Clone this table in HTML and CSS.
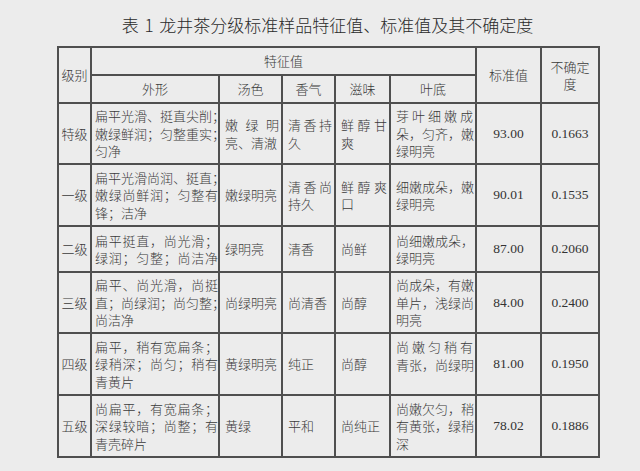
FILE: index.html
```html
<!DOCTYPE html>
<html lang="zh-CN">
<head>
<meta charset="utf-8">
<title>龙井茶分级标准样品</title>
<link rel="stylesheet" href="styles.css">
</head>
<body>
<div class="page">
  <h1 class="title">表 1 龙井茶分级标准样品特征值、标准值及其不确定度</h1>
  <table class="grade">
    <colgroup>
      <col class="c-level"><col class="c-shape"><col class="c-color"><col class="c-aroma"><col class="c-taste"><col class="c-leaf"><col class="c-value"><col class="c-unc">
    </colgroup>
    <thead>
      <tr class="hr">
        <th rowspan="2">级别</th>
        <th colspan="5">特征值</th>
        <th rowspan="2">标准值</th>
        <th rowspan="2" class="ml"><span>不确定</span><span>度</span></th>
      </tr>
      <tr class="hr">
        <th>外形</th><th>汤色</th><th>香气</th><th>滋味</th><th>叶底</th>
      </tr>
    </thead>
    <tbody>
      <tr class="r3">
        <th>特级</th>
        <td class="ml shape"><span>扁平光滑、挺直尖削；</span><span>嫩绿鲜润；匀整重实；</span><span>匀净</span></td>
        <td class="ml"><span>嫩绿明</span><span>亮、清澈</span></td>
        <td class="ml"><span>清香持</span><span>久</span></td>
        <td class="ml"><span>鲜醇甘</span><span>爽</span></td>
        <td class="ml"><span>芽叶细嫩成</span><span>朵，匀齐，嫩</span><span>绿明亮</span></td>
        <td class="num">93.00</td>
        <td class="num">0.1663</td>
      </tr>
      <tr class="r3b">
        <th>一级</th>
        <td class="ml shape"><span>扁平光滑尚润、挺直；</span><span>嫩绿尚鲜润；匀整有</span><span>锋；洁净</span></td>
        <td>嫩绿明亮</td>
        <td class="ml"><span>清香尚</span><span>持久</span></td>
        <td class="ml"><span>鲜醇爽</span><span>口</span></td>
        <td class="ml"><span>细嫩成朵，嫩</span><span>绿明亮</span></td>
        <td class="num">90.01</td>
        <td class="num">0.1535</td>
      </tr>
      <tr class="r2">
        <th>二级</th>
        <td class="ml shape"><span>扁平挺直，尚光滑；</span><span class="full">绿润；匀整；尚洁净</span></td>
        <td>绿明亮</td>
        <td>清香</td>
        <td>尚鲜</td>
        <td class="ml"><span>尚细嫩成朵，</span><span>绿明亮</span></td>
        <td class="num">87.00</td>
        <td class="num">0.2060</td>
      </tr>
      <tr class="r3">
        <th>三级</th>
        <td class="ml shape"><span>扁平、尚光滑，尚挺</span><span>直；尚绿润；尚匀整；</span><span>尚洁净</span></td>
        <td>尚绿明亮</td>
        <td>尚清香</td>
        <td>尚醇</td>
        <td class="ml"><span>尚成朵，有嫩</span><span>单片，浅绿尚</span><span>明亮</span></td>
        <td class="num">84.00</td>
        <td class="num">0.2400</td>
      </tr>
      <tr class="r3b">
        <th>四级</th>
        <td class="ml shape"><span>扁平，稍有宽扁条；</span><span>绿稍深；尚匀；稍有</span><span>青黄片</span></td>
        <td>黄绿明亮</td>
        <td>纯正</td>
        <td>尚醇</td>
        <td class="ml top"><span>尚嫩匀稍有</span><span class="full">青张，尚绿明</span></td>
        <td class="num">81.00</td>
        <td class="num">0.1950</td>
      </tr>
      <tr class="r3b">
        <th>五级</th>
        <td class="ml shape"><span>尚扁平，有宽扁条；</span><span>深绿较暗；尚整；有</span><span>青壳碎片</span></td>
        <td>黄绿</td>
        <td>平和</td>
        <td>尚纯正</td>
        <td class="ml"><span>尚嫩欠匀，稍</span><span>有黄张，绿稍</span><span>深</span></td>
        <td class="num">78.02</td>
        <td class="num">0.1886</td>
      </tr>
    </tbody>
  </table>
</div>
</body>
</html>
```
FILE: styles.css
```css
html, body {
  margin: 0;
  padding: 0;
  background: #ececec;
}

body {
  font-family: "Noto Sans CJK SC", "Noto Sans", sans-serif;
  color: #3a3a3a;
}

.page {
  width: 541px;
  margin-left: 57px;
  padding-top: 13px;
}

.title {
  margin: 0 0 9px;
  font-size: 17px;
  line-height: 24px;
  font-weight: 300;
  text-align: center;
  color: #2a2a2a;
  white-space: nowrap;
  word-spacing: 2px;
}

.grade {
  width: 541px;
  table-layout: fixed;
  border-collapse: collapse;
  font-size: 13px;
  line-height: 17.5px;
  font-weight: 300;
}

.c-level { width: 33px; }
.c-shape { width: 128px; }
.c-color { width: 63px; }
.c-aroma { width: 53px; }
.c-taste { width: 55px; }
.c-leaf  { width: 86px; }
.c-value { width: 65px; }
.c-unc   { width: 58px; }

.grade th,
.grade td {
  border: 2px solid #4f4f4f;
  padding: 0 2px 0 5px;
  vertical-align: middle;
  white-space: nowrap;
  overflow: visible;
}

.grade th {
  font-weight: 300;
  text-align: center;
  padding: 0 2px;
}

.grade td {
  text-align: left;
}

.hr { height: 28px; }
.r3 { height: 61px; }
.r3b { height: 62px; }
.r2 { height: 46px; }

.ml span {
  display: block;
}

.ml span:not(:last-child),
.ml span.full {
  text-align-last: justify;
}

.grade th.ml span {
  text-align: center;
  text-align-last: center;
}

.grade td.shape {
  padding-left: 3px;
  padding-right: 0;
}

.grade td.top {
  vertical-align: top;
  padding-top: 4px;
}

.grade td.num {
  text-align: center;
  padding: 0;
  font-family: "Liberation Serif", "Times New Roman", serif;
  font-size: 13.5px;
  font-weight: 400;
  color: #333;
}
```
